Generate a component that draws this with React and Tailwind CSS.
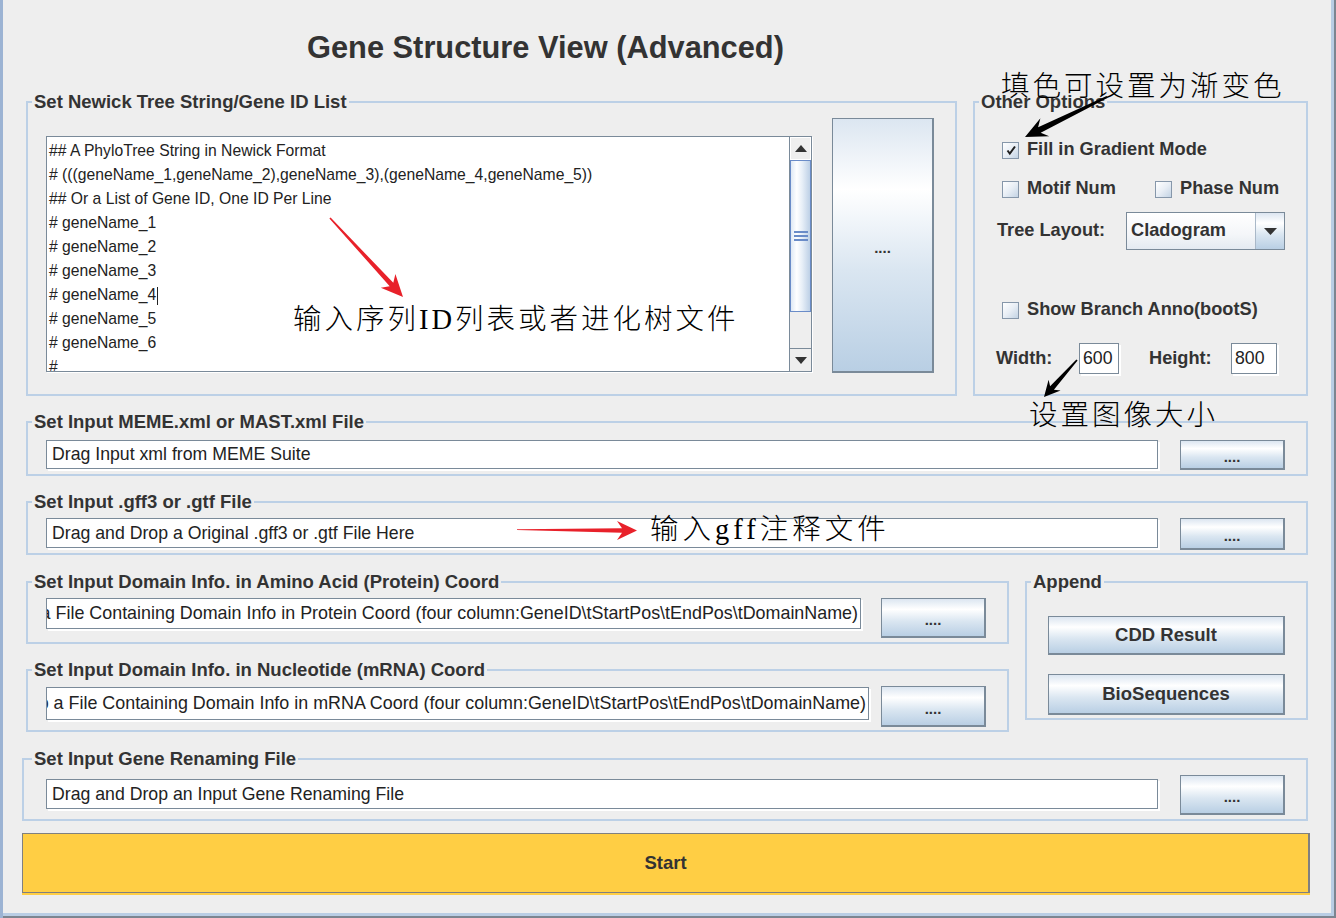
import React from "react";

const btn =
  "flex shrink-0 items-center justify-center border border-r-2 border-b-2 border-[#7a8a99] bg-[linear-gradient(to_bottom,#dce6f1_0%,#ffffff_28%,#dae6f1_60%,#b9cfe4_100%)] font-bold text-[#333]";

const legend = "ml-[4px] px-[2px] text-[18.5px] font-bold leading-[20px] text-[#333]";
const box = "border-2 border-[#bcd0e6] p-0 m-0 min-w-0";

function Check({ checked }) {
  return (
    <span className="flex h-[17px] w-[17px] shrink-0 items-center justify-center border border-[#8697aa] bg-[linear-gradient(135deg,#ffffff_0%,#e8eef5_50%,#c3d3e4_100%)]">
      {checked && (
        <svg width="12" height="12" viewBox="0 0 12 12">
          <path d="M2.5 6.5 L4.8 9.5 L10 2.5" stroke="#1f1f1f" strokeWidth="2" fill="none" />
        </svg>
      )}
    </span>
  );
}

function Field({ className, text, scrolled }) {
  return (
    <div
      className={`flex shrink-0 items-center overflow-hidden whitespace-nowrap border border-[#7a8a99] bg-white text-[#222] shadow-[2px_2px_0_#ffffff] ${
        scrolled ? "justify-end pr-[2px] text-[17.9px]" : "pl-[5px] text-[17.7px]"
      } ${className}`}
    >
      <span>{text}</span>
    </div>
  );
}

function Dots({ className }) {
  return <button className={`${btn} pt-[6px] text-[15px] ${className}`}>....</button>;
}

const lines = [
  "## A PhyloTree String in Newick Format",
  "# (((geneName_1,geneName_2),geneName_3),(geneName_4,geneName_5))",
  "## Or a List of Gene ID, One ID Per Line",
  "# geneName_1",
  "# geneName_2",
  "# geneName_3",
  "# geneName_4",
  "# geneName_5",
  "# geneName_6",
  "#",
];

const cjk = "pointer-events-none absolute whitespace-nowrap text-[28.5px] font-light leading-[36px] text-black";

export default function App() {
  return (
    <div className="relative h-[918px] w-[1336px] overflow-hidden bg-[#eeeeee] pl-[22px] font-['Liberation_Sans',Arial,sans-serif] text-[#333] shadow-[inset_3px_0_0_#9cb3d3,inset_-2px_-2px_0_#7c8590,inset_-5px_-5px_0_#b9cde4]">
      <h1 className="pl-[285px] pt-[30px] text-[30.8px] font-bold leading-[36px] text-[#333]">
        Gene Structure View (Advanced)
      </h1>

      {/* top row */}
      <div className="mt-[26px] ml-[4px] flex">
        <fieldset className={`${box} h-[304px] w-[931px]`}>
          <legend className={legend}>Set Newick Tree String/Gene ID List</legend>
          <div className="flex pl-[18px] pt-[6px]">
            <div className="mt-[18px] flex h-[236px] w-[766px] border border-[#7a8a99] bg-white shadow-[1px_1px_0_#ffffff]">
              <div className="flex-1 overflow-hidden pl-[2px] pt-[2px] text-[15.7px] leading-[24px] text-[#222]">
                {lines.map((l, i) => (
                  <div key={i} className="whitespace-nowrap">
                    {l}
                    {i === 6 && <span className="ml-[1px] inline-block h-[18px] w-0 border-l border-[#222] align-middle" />}
                  </div>
                ))}
              </div>
              <div className="flex w-[22px] flex-col border-l border-[#7a8a99] bg-[#eeeeee]">
                <div className="flex h-[23px] items-center justify-center border border-white bg-[#eeeeee]">
                  <svg width="12" height="7" viewBox="0 0 12 7"><path d="M0 7 L6 0 L12 7 Z" fill="#333" /></svg>
                </div>
                <div className="flex h-[152px] items-center justify-center border border-[#6a8cc8] bg-[linear-gradient(to_right,#dfe9f5_0%,#ffffff_30%,#e6eef7_60%,#bdd0e6_100%)]">
                  <div className="flex flex-col gap-[2px]">
                    <span className="h-[2px] w-[14px] bg-[#6a8cc8]" />
                    <span className="h-[2px] w-[14px] bg-[#6a8cc8]" />
                    <span className="h-[2px] w-[14px] bg-[#6a8cc8]" />
                  </div>
                </div>
                <div className="flex-1" />
                <div className="flex h-[23px] items-center justify-center border-t border-[#7a8a99] bg-[#eeeeee]">
                  <svg width="12" height="7" viewBox="0 0 12 7"><path d="M0 0 L12 0 L6 7 Z" fill="#333" /></svg>
                </div>
              </div>
            </div>
            <Dots className="ml-[20px] h-[255px] w-[102px]" />
          </div>
        </fieldset>

        <fieldset className={`${box} ml-[16px] h-[304px] w-[335px]`}>
          <legend className={legend}>Other Options</legend>
          <div className="text-[18.2px] font-bold">
            <div className="mt-[26px] flex h-[24px] items-center pl-[27px]">
              <Check checked />
              <span className="ml-[8px]">Fill in Gradient Mode</span>
            </div>
            <div className="mt-[15px] flex h-[24px] items-center pl-[27px]">
              <div className="flex w-[153px] items-center">
                <Check />
                <span className="ml-[8px]">Motif Num</span>
              </div>
              <Check />
              <span className="ml-[8px]">Phase Num</span>
            </div>
            <div className="mt-[11px] flex h-[38px] items-center pl-[22px]">
              <span className="w-[129px]">Tree Layout:</span>
              <div className="flex h-[38px] w-[159px] border border-[#7a8a99]">
                <div className="flex flex-1 items-center bg-[linear-gradient(to_bottom,#ffffff_0%,#f4f6f9_60%,#e4eaf1_100%)] pl-[4px]">
                  Cladogram
                </div>
                <div className="flex w-[29px] items-center justify-center border-l border-[#a9b8c8] bg-[linear-gradient(to_bottom,#dce6f1_0%,#ffffff_28%,#dae6f1_60%,#b9cfe4_100%)]">
                  <svg width="13" height="7" viewBox="0 0 13 7"><path d="M0 0 L13 0 L6.5 7 Z" fill="#333" /></svg>
                </div>
              </div>
            </div>
            <div className="mt-[48px] flex h-[24px] items-center pl-[27px]">
              <Check />
              <span className="ml-[8px]">Show Branch Anno(bootS)</span>
            </div>
            <div className="mt-[21px] flex h-[31px] items-center pl-[21px]">
              <span className="w-[83px]">Width:</span>
              <div className="flex h-[31px] w-[40px] items-center border border-[#7a8a99] bg-white pl-[3px] font-normal text-[17.7px] text-[#222] shadow-[2px_2px_0_#ffffff]">600</div>
              <span className="ml-[30px] w-[82px]">Height:</span>
              <div className="flex h-[31px] w-[46px] items-center border border-[#7a8a99] bg-white pl-[3px] font-normal text-[17.7px] text-[#222] shadow-[2px_2px_0_#ffffff]">800</div>
            </div>
          </div>
        </fieldset>
      </div>

      {/* MEME */}
      <fieldset className={`${box} mt-[16px] ml-[4px] h-[64px] w-[1282px]`}>
        <legend className={legend}>Set Input MEME.xml or MAST.xml File</legend>
        <div className="flex items-start pl-[18px] pt-[8px]">
          <Field className="h-[29px] w-[1112px]" text="Drag Input xml from MEME Suite" />
          <Dots className="ml-[22px] h-[30px] w-[105px]" />
        </div>
      </fieldset>

      {/* gff */}
      <fieldset className={`${box} mt-[16px] ml-[4px] h-[63px] w-[1282px]`}>
        <legend className={legend}>Set Input .gff3 or .gtf File</legend>
        <div className="flex items-start pl-[18px] pt-[6px]">
          <Field className="h-[30px] w-[1112px]" text="Drag and Drop a Original .gff3 or .gtf File Here" />
          <Dots className="ml-[22px] h-[32px] w-[105px]" />
        </div>
      </fieldset>

      {/* domain + append */}
      <div className="mt-[17px] ml-[4px] flex items-start">
        <div className="flex w-[983px] flex-col gap-[16px]">
          <fieldset className={`${box} h-[72px] w-[983px]`}>
            <legend className={legend}>Set Input Domain Info. in Amino Acid (Protein) Coord</legend>
            <div className="flex items-start pl-[18px] pt-[6px]">
              <Field
                scrolled
                className="h-[31px] w-[815px]"
                text={"Drag and Drop a File Containing Domain Info in Protein Coord (four column:GeneID\\tStartPos\\tEndPos\\tDomainName)"}
              />
              <Dots className="ml-[20px] h-[40px] w-[105px]" />
            </div>
          </fieldset>
          <fieldset className={`${box} h-[72px] w-[983px]`}>
            <legend className={legend}>Set Input Domain Info. in Nucleotide (mRNA) Coord</legend>
            <div className="flex items-start pl-[18px] pt-[6px]">
              <Field
                scrolled
                className="mt-[1px] h-[33px] w-[823px]"
                text={"Drag and Drop a File Containing Domain Info in mRNA Coord (four column:GeneID\\tStartPos\\tEndPos\\tDomainName)"}
              />
              <Dots className="ml-[12px] h-[41px] w-[105px]" />
            </div>
          </fieldset>
        </div>
        <fieldset className={`${box} ml-[16px] h-[148px] w-[283px]`}>
          <legend className={legend}>Append</legend>
          <div className="flex flex-col pl-[21px] pt-[24px] text-[18.5px]">
            <button className={`${btn} h-[39px] w-[237px]`}>CDD Result</button>
            <button className={`${btn} mt-[19px] h-[41px] w-[237px]`}>BioSequences</button>
          </div>
        </fieldset>
      </div>

      {/* renaming */}
      <fieldset className={`${box} mt-[17px] h-[72px] w-[1286px]`}>
        <legend className={`${legend} ml-[8px]`}>Set Input Gene Renaming File</legend>
        <div className="flex items-start pl-[22px] pt-[6px]">
          <Field className="mt-[4px] h-[30px] w-[1112px]" text="Drag and Drop an Input Gene Renaming File" />
          <Dots className="ml-[22px] h-[40px] w-[105px]" />
        </div>
      </fieldset>

      <button className="mt-[12px] flex h-[60px] w-[1288px] items-center justify-center border border-r-2 border-[#808080] bg-[#ffce44] text-[18.5px] font-bold text-[#333] shadow-[0_2px_0_#ffce44]">
        Start
      </button>

      {/* annotations */}
      <div className={`${cjk} left-[293px] top-[302px] font-['Liberation_Serif','Noto_Sans_CJK_SC',serif] tracking-[3px]`}>
        输入序列ID列表或者进化树文件
      </div>
      <div className={`${cjk} left-[650px] top-[512px] font-['Liberation_Serif','Noto_Sans_CJK_SC',serif] tracking-[4px]`}>
        输入gff注释文件
      </div>
      <div className={`${cjk} left-[1001px] top-[66px] font-['Noto_Sans_CJK_SC',serif] tracking-[3px]`}>
        填色可设置为渐变色
      </div>
      <div className={`${cjk} left-[1029px] top-[395px] font-['Noto_Sans_CJK_SC',serif] tracking-[3px]`}>
        设置图像大小
      </div>

      <svg className="pointer-events-none absolute left-0 top-0" width="1336" height="918">
        <polygon
          fill="#e8212a"
          points="329.4,218.5 389.7,286.2 380.8,287.7 403,297 395.4,274.1 393.3,282.8 330.6,217.5"
        />
        <polygon fill="#e8212a" points="517,530 622,532.8 617,540 637,530.5 617,521 622,528.2 517,529.2" />
        <polygon
          fill="#000"
          points="1106.6,96.1 1038.1,127.3 1040.4,118.3 1025,137 1049.2,136.3 1040.7,132.7 1107.4,97.9"
        />
        <polygon
          fill="#000"
          points="1076.4,359.5 1050.1,386.3 1048.6,379.8 1044,397 1060.6,390.4 1053.9,389.7 1077.6,360.5"
        />
      </svg>
    </div>
  );
}
